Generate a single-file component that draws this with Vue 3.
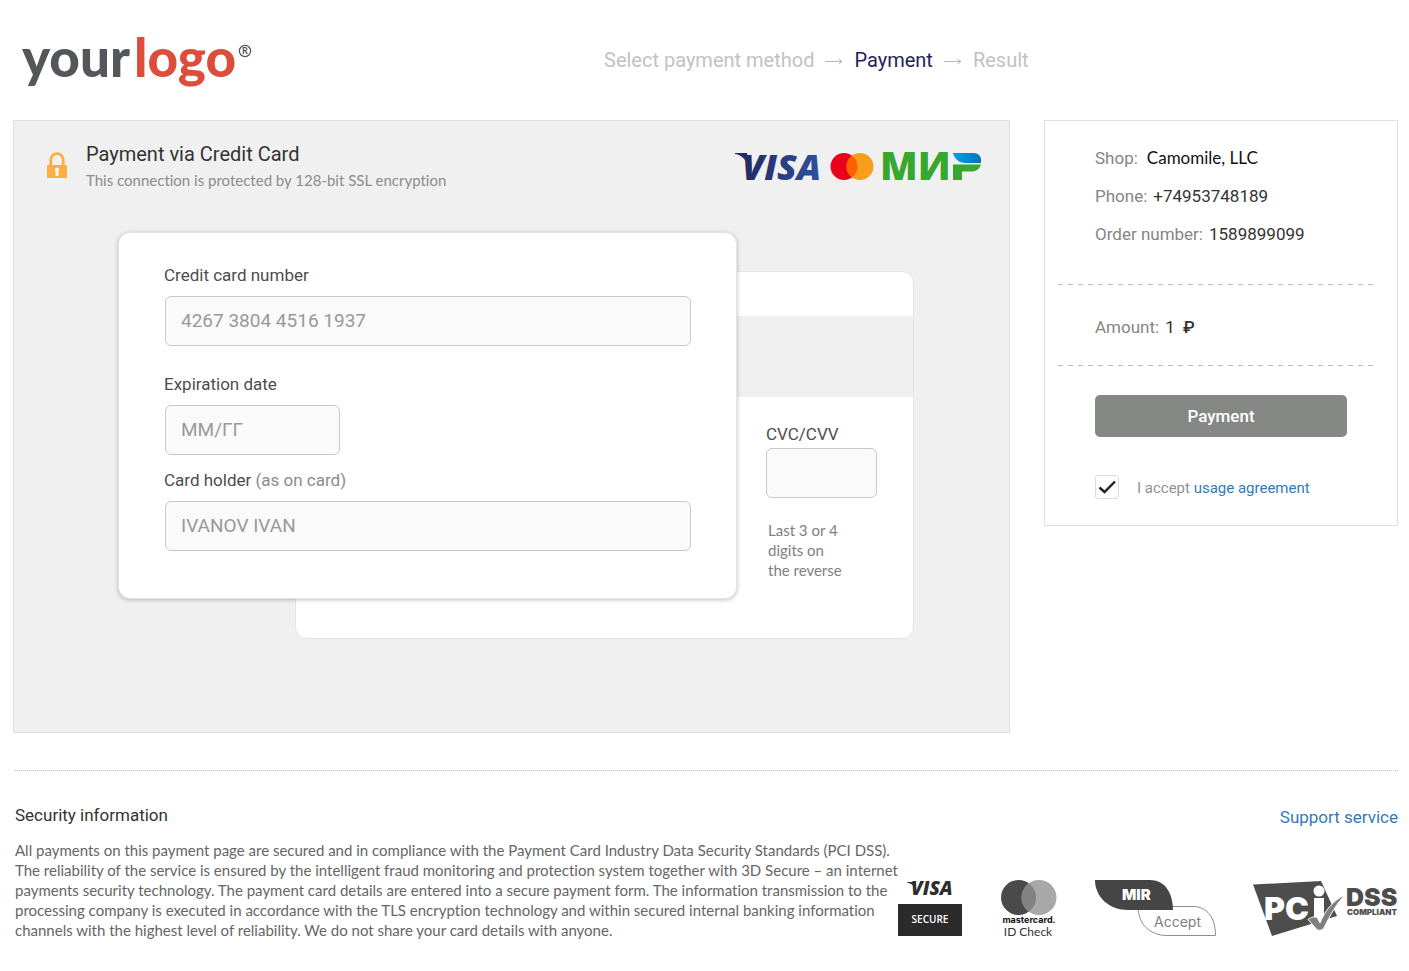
<script setup>
import { ref } from 'vue'

const cardNumber = ref('')
const expiry = ref('')
const holder = ref('')
const cvc = ref('')
const accepted = ref(true)
</script>

<template>
  <div class="page">
    <header class="header">
      <a class="logo" href="#" aria-label="your logo">
        <svg width="236" height="80" viewBox="0 0 236 80">
          <text class="logo-word dark" x="1" y="57">your</text>
          <text class="logo-word red" x="113" y="57">logo</text>
          <circle cx="224" cy="31" r="5.6" fill="none" stroke="#4b5557" stroke-width="1.2" />
          <text class="logo-reg" x="221" y="34">R</text>
        </svg>
      </a>
      <nav class="steps" aria-label="Progress">
        <span>Select payment method</span>
        <svg class="arrow" width="18" height="10" viewBox="0 0 18 10"><path d="M0 5.5H17M13.500 3l3.500 2.500L13.500 8" /></svg>
        <span class="current">Payment</span>
        <svg class="arrow" width="18" height="10" viewBox="0 0 18 10"><path d="M0 5.5H17M13.500 3l3.500 2.500L13.500 8" /></svg>
        <span>Result</span>
      </nav>
    </header>

    <div class="columns">
      <main class="panel">
        <div class="panel-head">
          <svg class="lock" width="22" height="27" viewBox="0 0 22 27">
            <path d="M4.8 14V8a6 6.2 0 0 1 12.4 0v6" fill="none" stroke="#fbb040" stroke-width="2.8" />
            <rect x="1" y="13" width="20" height="13" rx="1" fill="#fbb040" />
            <path d="M11 15.6a2.3 2.3 0 0 1 1.2 4.2l.5 3.9h-3.4l.5-3.9A2.3 2.3 0 0 1 11 15.6z" fill="#fff" />
          </svg>
          <div class="titles">
            <h1>Payment via Credit Card</h1>
            <p>This connection is protected by 128-bit SSL encryption</p>
          </div>
          <svg class="brands" width="248" height="54" viewBox="0 -12 248 54" role="img" aria-label="Visa, Mastercard, Mir">
            <defs>
              <linearGradient id="visa" x1="0" x2="1"><stop offset="0" stop-color="#262861" /><stop offset="1" stop-color="#2f519f" /></linearGradient>
              <linearGradient id="mir" x1="0" x2="1"><stop offset="0" stop-color="#00a0e4" /><stop offset="1" stop-color="#0473bb" /></linearGradient>
            </defs>
            <path d="M2 3h12l3 18C14 10 9 5 2 4z" fill="#262861" />
            <text class="visa" x="9" y="30" fill="url(#visa)">VISA</text>
            <circle cx="111" cy="16.500" r="13.500" fill="#eb001b" />
            <circle cx="127" cy="16.500" r="13.500" fill="#f79e1b" />
            <path d="M119 5.600a13.500 13.500 0 0 1 0 21.800a13.500 13.500 0 0 1 0-21.800z" fill="#ff5f00" />
            <text class="mir" x="147" y="30">МИ</text>
            <path d="M220 14.500h28c-1.500 4.500-5 7-9.500 7H229V30h-9z" fill="#37a72e" />
            <path d="M220 3h20c5.500 0 9 3.500 8 10H233c-7 0-11.500-4-13-10z" fill="url(#mir)" />
          </svg>
        </div>

        <form class="stage" @submit.prevent>
          <section class="card front">
            <label for="number">Credit card number</label>
            <input id="number" v-model="cardNumber" type="text" placeholder="4267 3804 4516 1937" />
            <label for="expiry" class="label-expiry">Expiration date</label>
            <input id="expiry" v-model="expiry" class="short" type="text" placeholder="ММ/ГГ" />
            <label for="holder" class="label-holder">Card holder <span>(as on card)</span></label>
            <input id="holder" v-model="holder" type="text" placeholder="IVANOV IVAN" />
          </section>
          <section class="card back">
            <div class="stripe"></div>
            <div class="cvc">
              <label for="cvc">CVC/CVV</label>
              <input id="cvc" v-model="cvc" type="password" />
              <p>Last 3 or 4<br />digits on<br />the reverse</p>
            </div>
          </section>
        </form>
      </main>

      <aside class="order">
        <dl>
          <div><dt>Shop:</dt><dd class="shop">Camomile, LLC</dd></div>
          <div><dt>Phone:</dt><dd>+74953748189</dd></div>
          <div><dt>Order number:</dt><dd>1589899099</dd></div>
        </dl>
        <hr />
        <dl class="amount">
          <div><dt>Amount:</dt><dd>1 <span class="ruble">₽</span></dd></div>
        </dl>
        <hr />
        <button type="button">Payment</button>
        <div class="accept">
          <span class="tick">
            <input id="accept" v-model="accepted" type="checkbox" />
            <svg v-if="accepted" width="18" height="14" viewBox="0 0 18 14"><path d="M1.500 7.500l5 4.500L17 1.500" /></svg>
          </span>
          <label for="accept">I accept <a href="#">usage agreement</a></label>
        </div>
      </aside>
    </div>

    <footer class="footer">
      <div class="footer-head">
        <h2>Security information</h2>
        <a href="#">Support service</a>
      </div>
      <div class="footer-body">
        <p>
          All payments on this payment page are secured and in compliance with the Payment Card Industry Data Security Standards (PCI DSS).<br />
          The reliability of the service is ensured by the intelligent fraud monitoring and protection system together with 3D Secure – an internet<br />
          payments security technology. The payment card details are entered into a secure payment form. The information transmission to the<br />
          processing company is executed in accordance with the TLS encryption technology and within secured internal banking information<br />
          channels with the highest level of reliability. We do not share your card details with anyone.
        </p>
        <div class="badges">
          <svg width="66" height="70" viewBox="0 -8 66 70" role="img" aria-label="Visa Secure">
            <path d="M9 2h7l1.500 7C15.500 5 12.500 3 9 2.500z" fill="#2e2e2e" />
            <text class="visa-small" x="13" y="15">VISA</text>
            <rect y="24" width="64" height="32" fill="#2b2b2b" />
            <text class="secure" x="32" y="43" text-anchor="middle">SECURE</text>
          </svg>
          <svg width="57" height="70" viewBox="0 -8 57 70" role="img" aria-label="Mastercard ID Check">
            <circle cx="17.500" cy="17.500" r="17.500" fill="#4a4a4a" />
            <circle cx="38" cy="17.500" r="17.500" fill="#a8a8a8" />
            <path d="M27.750 3.300a17.500 17.500 0 0 1 0 28.400a17.500 17.500 0 0 1 0-28.400z" fill="#828282" />
            <text class="mc" x="28" y="43" text-anchor="middle">mastercard.</text>
            <text class="idcheck" x="27" y="56" text-anchor="middle">ID Check</text>
          </svg>
          <svg width="121" height="70" viewBox="0 -8 121 70" role="img" aria-label="Mir Accept">
            <path d="M43 26.500H98c14 0 22.500 11 22.500 29H72C55 55.500 43 44 43 26.500z" fill="#fff" stroke="#8c8c8c" />
            <path d="M0 0h55c14 0 22.500 11 23 30H33C14 30 0 17 0 0z" fill="#454545" />
            <text class="mir-small" x="27" y="20">MIR</text>
            <text class="accept-word" x="59" y="47">Accept</text>
          </svg>
          <svg width="145" height="70" viewBox="0 -8 145 70" role="img" aria-label="PCI DSS Compliant">
            <path d="M0 4.500L68 1l16 35L19 56z" fill="#4d4d4d" />
            <text class="pci" x="11" y="40">PC</text>
            <path d="M61 18h10v18l-4 6h-6z" fill="#fff" />
            <circle cx="66" cy="11" r="5.500" fill="#fff" />
            <path d="M55 39.500c3-2.500 7-3.500 9.500-1.500l2.500 5c5-12 12-22 25.500-28.500c-9 9-15 20-21.500 33.500c-2 3-7 3-8.500 0z" fill="#808080" stroke="#fff" stroke-width="1" />
            <text class="dss" x="93" y="26">DSS</text>
            <text class="compliant" x="94" y="35">COMPLIANT</text>
          </svg>
        </div>
      </div>
    </footer>
  </div>
</template>

<style>
body {
  background: #fff;
}
</style>

<style scoped>
.page {
  padding: 0 11px 30px 13px;
  font-family: Roboto, "Noto Sans", sans-serif;
  font-weight: 400;
  color: #333;
}
h1, h2, p, dl, dd {
  margin: 0;
  font-weight: 400;
}
a {
  color: #337ab7;
  text-decoration: none;
}

.header {
  display: flex;
  align-items: center;
  height: 120px;
}
.logo {
  display: block;
  width: 236px;
  height: 80px;
  margin-left: 8px;
}
.logo-word {
  font: 900 53px Lato, sans-serif;
}
.dark {
  fill: #54565a;
}
.red {
  fill: #dc4e3b;
}
.logo-reg {
  font: 700 9px Lato, sans-serif;
  fill: #4b5557;
}
.steps {
  display: flex;
  align-items: center;
  gap: 11px;
  margin-left: 347px;
  font-size: 20px;
  line-height: 24px;
  color: #c2c2c2;
}
.steps .current {
  color: #26235a;
}
.arrow {
  margin-top: 2px;
}
.arrow path {
  fill: none;
  stroke: #b5b5b5;
}

.columns {
  display: flex;
  align-items: flex-start;
  gap: 34px;
}
.panel {
  flex: 1;
  box-sizing: border-box;
  padding: 20px 28px 93px 32px;
  background: #f0f0f0;
  border: 1px solid #e0e0e0;
}
.panel-head {
  display: flex;
  align-items: flex-start;
  height: 54px;
}
.lock {
  margin-top: 11px;
}
.titles {
  flex: 1;
  margin-left: 18px;
}
.titles h1 {
  font-size: 20px;
  line-height: 26px;
}
.titles p {
  font: 15px Lato, sans-serif;
  font-variant-ligatures: none;
  line-height: 26px;
  color: #8c8c8c;
}
.brands {
  margin-top: -3px;
}
.visa {
  font: italic 900 36px "Open Sans", sans-serif;
}
.mir {
  font: 900 39px "Open Sans", sans-serif;
  fill: #37a72e;
}

.stage {
  display: grid;
  grid-template-columns: 177px 442px 177px;
  grid-template-rows: 39px auto 40px;
  margin: 37px 0 0 72px;
}
.card {
  box-sizing: border-box;
  background: #fff;
  border: 1px solid #e4e4e4;
  border-radius: 12px;
}
.front {
  grid-area: 1 / 1 / 3 / 3;
  z-index: 1;
  display: flex;
  flex-direction: column;
  align-items: flex-start;
  padding: 32px 46px 47px 45px;
  box-shadow: 0 1px 4px rgba(0, 0, 0, 0.25);
}
.back {
  grid-area: 2 / 2 / 4 / 4;
}
.stage label {
  font-size: 17px;
  line-height: 20px;
  color: #4d4d4d;
}
.stage label span {
  color: #8c8c8c;
}
.stage input {
  box-sizing: border-box;
  width: 100%;
  height: 50px;
  margin-top: 11px;
  margin-left: 1px;
  padding: 0 15px 2px;
  border: 1px solid #c9c9c9;
  border-radius: 6px;
  background: #fafafa;
  font: inherit;
  font-size: 19px;
  color: #333;
}
.stage input::placeholder {
  color: #999;
  opacity: 1;
}
.stage .short {
  width: 175px;
}
.label-expiry {
  margin-top: 28px;
}
.label-holder {
  margin-top: 15px;
}
.stripe {
  height: 81px;
  margin-top: 44px;
  background: #f0f0f0;
}
.cvc {
  display: flex;
  flex-direction: column;
  width: 111px;
  margin: 27px 36px 0 auto;
}
.stage .cvc input {
  margin: 4px 0 0;
}
.cvc p {
  margin: 22px 0 0 2px;
  font: 15px Lato, sans-serif;
  line-height: 20px;
  color: #808080;
}

.order {
  box-sizing: border-box;
  width: 354px;
  padding: 25px 13px;
  border: 1px solid #e0e0e0;
}
.order dl {
  display: grid;
  gap: 14px;
  padding-left: 37px;
  font-size: 17px;
  line-height: 24px;
}
.order dl div {
  display: flex;
  gap: 6px;
}
.order dt {
  color: #858585;
}
.order .shop {
  margin-left: 3px;
  font-family: Lato, sans-serif;
  color: #111;
}
.ruble {
  margin-left: 4px;
  font-weight: 500;
}
.order hr {
  height: 1px;
  margin: 38px 9px 0 0;
  border: 0;
  background: repeating-linear-gradient(90deg, #bdbdbd 0 5px, transparent 5px 10px);
}
.order .amount {
  margin-top: 30px;
}
.order .amount + hr {
  margin-top: 26px;
}
.order button {
  display: block;
  width: 252px;
  height: 42px;
  margin: 29px 0 0 37px;
  border: 0;
  border-radius: 5px;
  background: #868886;
  font: 500 17px Roboto, sans-serif;
  color: #fff;
}
.accept {
  display: flex;
  align-items: center;
  gap: 18px;
  margin: 37px 0 0 37px;
  font-size: 15px;
  line-height: 24px;
  color: #929292;
}
.accept label {
  padding-top: 2px;
}
.tick {
  display: grid;
  place-items: center;
}
.tick > * {
  grid-area: 1 / 1;
}
.tick input {
  appearance: none;
  box-sizing: border-box;
  width: 24px;
  height: 24px;
  margin: 0;
  border: 1px solid #dcdcdc;
  border-radius: 3px;
  background: #fff;
}
.tick path {
  fill: none;
  stroke: #222;
  stroke-width: 2.4;
}
.tick svg {
  pointer-events: none;
}

.footer {
  margin: 37px 0 0 2px;
  padding-top: 32px;
  border-top: 1px dotted #bdbdbd;
}
.footer-head {
  display: flex;
  justify-content: space-between;
  font-size: 17px;
  line-height: 24px;
}
.footer-head h2 {
  font-size: 17px;
}
.footer-head a {
  margin-top: 2px;
}
.footer-body {
  display: flex;
  justify-content: space-between;
  align-items: flex-start;
  margin-top: 11px;
}
.footer-body p {
  font: 15px Lato, sans-serif;
  font-variant-ligatures: none;
  line-height: 20px;
  color: #666;
  white-space: nowrap;
}
.badges {
  display: flex;
  gap: 37px;
  margin-top: 32px;
}
.badges svg {
  flex: none;
}
.visa-small {
  font: italic 900 19px "Open Sans", sans-serif;
  fill: #2e2e2e;
}
.secure {
  font: 600 10px "Open Sans", sans-serif;
  fill: #fff;
}
.mc {
  font: 700 9px Inter, sans-serif;
  fill: #111;
}
.idcheck {
  font: 400 12px Lato, sans-serif;
  fill: #333;
}
.mir-small {
  font: 900 15px Inter, sans-serif;
  fill: #fff;
}
.accept-word {
  font: 400 14px Inter, sans-serif;
  fill: #808080;
}
.pci {
  font: 900 32px Inter, sans-serif;
  fill: #fff;
}
.dss {
  font: 900 25px Inter, sans-serif;
  fill: #4d4d4d;
}
.compliant {
  font: 900 8px Inter, sans-serif;
  fill: #4d4d4d;
}
</style>
